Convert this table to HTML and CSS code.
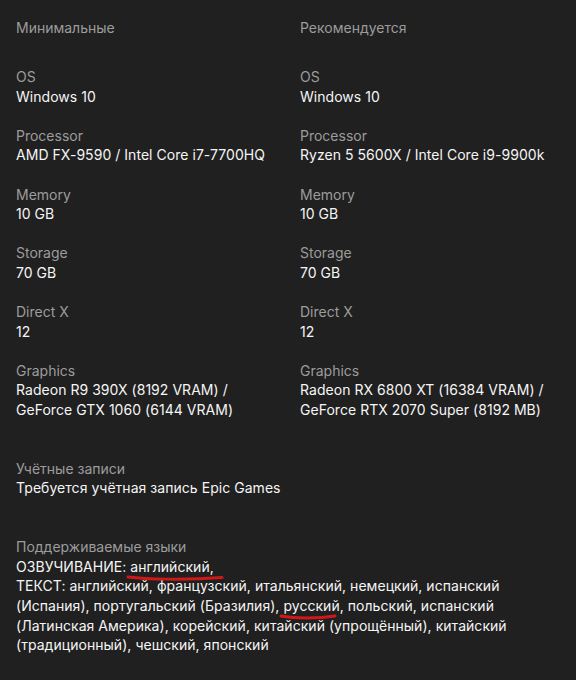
FILE: index.html
```html
<!DOCTYPE html>
<html lang="ru">
<head>
<meta charset="utf-8">
<link rel="stylesheet" href="styles.css">
</head>
<body>
<main class="page">
  <section class="specs">
    <div class="col">
      <div class="heading">Минимальные</div>
      <div class="item"><div class="label">OS</div><div class="value">Windows 10</div></div>
      <div class="item"><div class="label">Processor</div><div class="value">AMD FX-9590 / Intel Core i7-7700HQ</div></div>
      <div class="item"><div class="label">Memory</div><div class="value">10 GB</div></div>
      <div class="item"><div class="label">Storage</div><div class="value">70 GB</div></div>
      <div class="item"><div class="label">Direct X</div><div class="value">12</div></div>
      <div class="item"><div class="label">Graphics</div><div class="value">Radeon R9 390X (8192 VRAM) / GeForce GTX 1060 (6144 VRAM)</div></div>
    </div>
    <div class="col">
      <div class="heading">Рекомендуется</div>
      <div class="item"><div class="label">OS</div><div class="value">Windows 10</div></div>
      <div class="item"><div class="label">Processor</div><div class="value">Ryzen 5 5600X / Intel Core i9-9900k</div></div>
      <div class="item"><div class="label">Memory</div><div class="value">10 GB</div></div>
      <div class="item"><div class="label">Storage</div><div class="value">70 GB</div></div>
      <div class="item"><div class="label">Direct X</div><div class="value">12</div></div>
      <div class="item"><div class="label">Graphics</div><div class="value">Radeon RX 6800 XT (16384 VRAM) / GeForce RTX 2070 Super (8192 MB)</div></div>
    </div>
  </section>
  <section class="item block">
    <div class="label">Учётные записи</div>
    <div class="value">Требуется учётная запись Epic Games</div>
  </section>
  <section class="item block">
    <div class="label">Поддерживаемые языки</div>
    <div class="value">ОЗВУЧИВАНИЕ: <span class="mark">английский,<svg class="scribble s1" viewBox="0 0 96 6" preserveAspectRatio="none"><path d="M1 2 C 20 4.5, 60 5, 95 2.5"/></svg></span><br>ТЕКСТ: английский, французский, итальянский, немецкий, испанский (Испания), португальский (Бразилия), <span class="mark">русский<svg class="scribble s2" viewBox="0 0 56 6" preserveAspectRatio="none"><path d="M1 2 C 15 4.5, 38 4.5, 55 2"/></svg></span>, польский, испанский (Латинская Америка), корейский, китайский (упрощённый), китайский (традиционный), чешский, японский</div>
  </section>
</main>
</body>
</html>
```
FILE: styles.css
```css
html, body {
  margin: 0;
  padding: 0;
  background: #202020;
}
body {
  font-family: Inter, "Noto Sans", sans-serif;
  font-size: 14px;
  line-height: 19.6px;
  color: #f5f5f5;
}
.page {
  padding: 18px 16px 0 16px;
}
.specs {
  display: grid;
  grid-template-columns: 260px 260px;
  column-gap: 24px;
}
.col {
  display: flex;
  flex-direction: column;
  gap: 19.6px;
}
.heading {
  color: #9c9c9c;
  margin-bottom: 9.8px;
}
.label {
  color: #9c9c9c;
}
.value {
  color: #f5f5f5;
  letter-spacing: 0.04px;
}
.block {
  margin-top: 39.2px;
}
.mark {
  position: relative;
}
.scribble {
  position: absolute;
  left: -3px;
  height: 6px;
  overflow: visible;
  pointer-events: none;
}
.scribble path {
  fill: none;
  stroke: #d01818;
  stroke-width: 3;
  stroke-linecap: round;
  vector-effect: non-scaling-stroke;
}
.s1 {
  width: 96px;
  top: 17px;
}
.s2 {
  width: 56px;
  top: 17px;
}
```
